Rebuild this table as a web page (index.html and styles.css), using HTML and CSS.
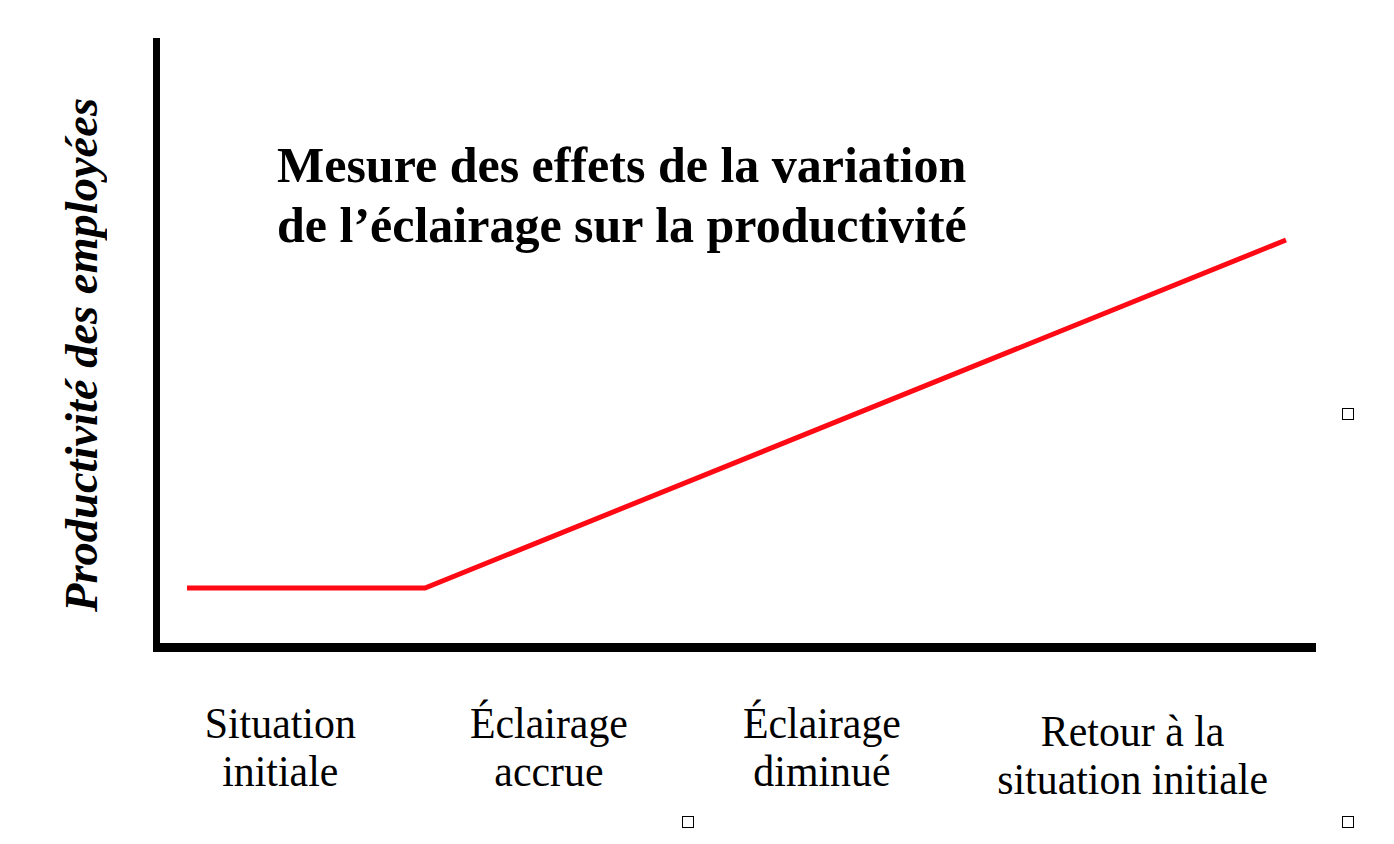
FILE: index.html
```html
<!DOCTYPE html>
<html lang="fr">
<head>
<meta charset="utf-8">
<title>Mesure des effets de la variation de l'éclairage sur la productivité</title>
<link rel="stylesheet" href="styles.css">
</head>
<body>
<div class="page">
  <div class="chart">
    <div class="y-label-col">
      <div class="y-label">Productivité des employées</div>
    </div>
    <div class="plot">
      <h1 class="title">Mesure des effets de la variation<br>de l’éclairage sur la productivité</h1>
    </div>
    <div class="x-labels">
      <div class="x-label x1"><span class="x-text">Situation<br>initiale</span></div>
      <div class="x-label x2"><span class="x-text">Éclairage<br>accrue</span></div>
      <div class="x-label x3"><span class="x-text">Éclairage<br>diminué</span></div>
      <div class="x-label x4"><span class="x-text">Retour à la<br>situation initiale</span></div>
    </div>
  </div>
  <svg class="trend" width="1394" height="844" viewBox="0 0 1394 844" aria-hidden="true">
    <polyline points="187,588 425,588 1286,240" fill="none" stroke="#ff0a14" stroke-width="5" stroke-linejoin="miter"/>
  </svg>
  <span class="anchor a1"></span>
  <span class="anchor a2"></span>
  <span class="anchor a3"></span>
</div>
</body>
</html>
```

FILE: styles.css
```css
html, body {
  margin: 0;
  padding: 0;
  background: #ffffff;
}

.page {
  position: relative;
  width: 1394px;
  height: 844px;
  overflow: hidden;
  background: #ffffff;
  color: #000000;
  font-family: "Liberation Serif", "Times New Roman", serif;
}

.chart {
  display: grid;
  grid-template-columns: 153px 1163px;
  grid-template-rows: 614px auto;
  padding-top: 38px;
}

.y-label-col {
  display: flex;
  justify-content: flex-start;
  align-items: flex-end;
  padding-left: 55px;
  padding-bottom: 40px;
}

.y-label {
  writing-mode: vertical-rl;
  transform: rotate(180deg);
  font-size: 46.5px;
  font-weight: bold;
  font-style: italic;
  white-space: nowrap;
  line-height: 53px;
}

.plot {
  box-sizing: border-box;
  border-left: 7px solid #000000;
  border-bottom: 9px solid #000000;
  padding-left: 117px;
  padding-top: 97px;
}

.title {
  margin: 0;
  font-size: 50px;
  font-weight: bold;
  line-height: 60px;
  white-space: nowrap;
}

.x-labels {
  grid-column: 1 / span 2;
  display: grid;
  grid-template-columns: 240px 298px 248px 374px;
  padding-left: 160px;
  margin-top: 47px;
}

.x-label {
  display: flex;
  justify-content: center;
  font-size: 45px;
  line-height: 48px;
  white-space: nowrap;
}

.x-text {
  display: block;
  text-align: center;
  transform: scaleX(0.93);
}

.x4 {
  padding-top: 8px;
}

.trend {
  position: absolute;
  left: 0;
  top: 0;
  pointer-events: none;
}

.anchor {
  position: absolute;
  box-sizing: border-box;
  width: 12px;
  height: 12px;
  border: 1px solid #000000;
  background: #ffffff;
}

.a1 { left: 1342px; top: 408px; }
.a2 { left: 682px; top: 816px; }
.a3 { left: 1342px; top: 816px; }
```
